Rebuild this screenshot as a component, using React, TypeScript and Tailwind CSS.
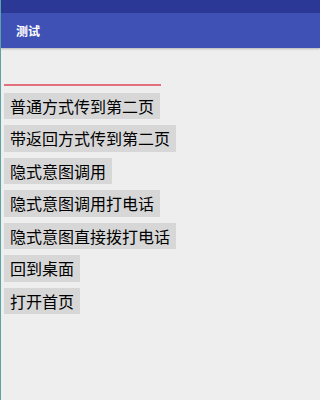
import React from "react";

const buttons = [
  "普通方式传到第二页",
  "带返回方式传到第二页",
  "隐式意图调用",
  "隐式意图调用打电话",
  "隐式意图直接拨打电话",
  "回到桌面",
  "打开首页",
];

export default function App() {
  return (
    <div
      className="w-full min-h-screen h-[400px] bg-[#eeeeee] border-l border-[#5aa4a6] overflow-hidden"
      style={{ fontFamily: '"Noto Sans CJK SC", "Noto Sans", sans-serif' }}
    >
      {/* status bar */}
      <div className="h-[13px] bg-[#2b3896]" />
      {/* toolbar */}
      <div className="h-[35px] bg-[#3f51b5] flex items-center pl-[15px] shadow-[0_1px_2px_rgba(0,0,0,0.25)]">
        <span className="text-white text-[12px] font-semibold">测试</span>
      </div>

      <div className="px-[3px]">
        {/* edit text underline */}
        <div className="h-[36px]" />
        <div className="h-[1.5px] w-[157px] bg-[#e2707c]" />

        <div className="mt-[7px] flex flex-col items-start gap-[6px]">
          {buttons.map((b) => (
            <button
              key={b}
              className="h-[26.5px] px-[6px] bg-[#d7d7d7] text-[16px] leading-none text-black flex items-center"
            >
              {b}
            </button>
          ))}
        </div>
      </div>
    </div>
  );
}
